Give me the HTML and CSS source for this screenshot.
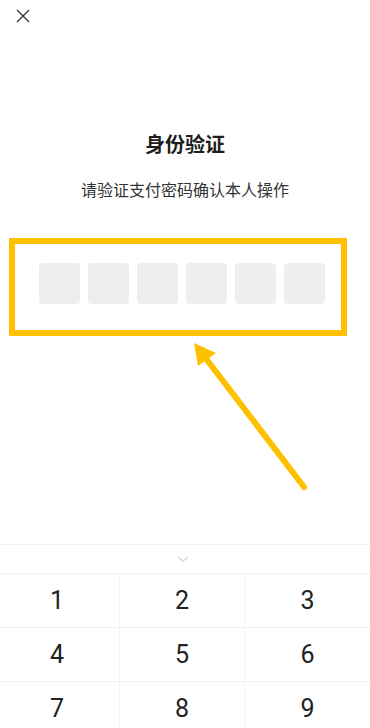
FILE: index.html
```html
<!DOCTYPE html>
<html lang="zh-CN">
<head>
<meta charset="utf-8">
<title>身份验证</title>
<link rel="stylesheet" href="styles.css">
</head>
<body>
<div class="page">
  <header class="topbar">
    <svg class="close" width="14" height="14" viewBox="0 0 14 14"><path d="M1 1L13 13M13 1L1 13" stroke="#333" stroke-width="1.3" fill="none"/></svg>
  </header>
  <main class="main">
    <h1 class="title">身份验证</h1>
    <p class="subtitle">请验证支付密码确认本人操作</p>
    <div class="codebox">
      <div class="cells">
        <span class="cell"></span><span class="cell"></span><span class="cell"></span><span class="cell"></span><span class="cell"></span><span class="cell"></span>
      </div>
    </div>
  </main>
  <svg class="arrow" width="370" height="728" viewBox="0 0 370 728">
    <line x1="304" y1="487" x2="204" y2="356" stroke="#FFC000" stroke-width="6" stroke-linecap="round"/>
    <polygon points="194,343 216,353 198,366" fill="#FFC000"/>
  </svg>
  <section class="keypad">
    <div class="kp-head">
      <svg width="12" height="7" viewBox="0 0 12 7"><path d="M1 1L6 5.5L11 1" stroke="#d6d6d6" stroke-width="1.1" fill="none"/></svg>
    </div>
    <div class="keys">
      <div class="key">1</div><div class="key">2</div><div class="key">3</div>
      <div class="key">4</div><div class="key">5</div><div class="key">6</div>
      <div class="key">7</div><div class="key">8</div><div class="key">9</div>
    </div>
  </section>
</div>
</body>
</html>
```
FILE: styles.css
```css
html, body {
  margin: 0;
  padding: 0;
  background: #fff;
}
body {
  font-family: "Noto Sans CJK SC", "Noto Sans", sans-serif;
  color: #222;
}
.page {
  position: relative;
  width: 370px;
  height: 728px;
  overflow: hidden;
}
.topbar {
  height: 32px;
  padding-left: 16px;
  padding-top: 9px;
  box-sizing: border-box;
}
.close {
  display: block;
}
.main {
  display: flex;
  flex-direction: column;
  align-items: center;
}
.title {
  margin: 100px 0 0;
  font-size: 20px;
  line-height: 24px;
  font-weight: 700;
  color: #1e1e1e;
}
.subtitle {
  margin: 22px 0 0;
  font-size: 16px;
  line-height: 22px;
  color: #333;
}
.codebox {
  align-self: flex-start;
  margin: 38px 0 0 9px;
  width: 338px;
  height: 98px;
  box-sizing: border-box;
  border: 6px solid #FFC000;
  padding: 19px 0 0 24px;
}
.cells {
  display: flex;
  gap: 8px;
}
.cell {
  width: 41px;
  height: 41px;
  border-radius: 4px;
  background: #eeeeee;
}
.arrow {
  position: absolute;
  left: 0;
  top: 0;
  pointer-events: none;
}
.keypad {
  margin-top: 208px;
  border-top: 1px solid #f1f1f1;
}
.kp-head {
  height: 28px;
  display: flex;
  align-items: center;
  justify-content: center;
  box-sizing: border-box;
}
.kp-head svg {
  display: block;
  margin-left: -4px;
}
.keys {
  margin-left: -5px;
  width: 375px;
  display: grid;
  grid-template-columns: repeat(3, 125px);
  border-top: 1px solid #f1f1f1;
}
.key {
  height: 53px;
  border-bottom: 1px solid #f1f1f1;
  border-right: 1px solid #f1f1f1;
  display: flex;
  align-items: center;
  justify-content: center;
  font-family: Roboto, "Noto Sans", sans-serif;
  font-weight: 400;
  font-size: 25px;
  color: #222;
}
.key:nth-child(3n) {
  border-right: none;
}
```
